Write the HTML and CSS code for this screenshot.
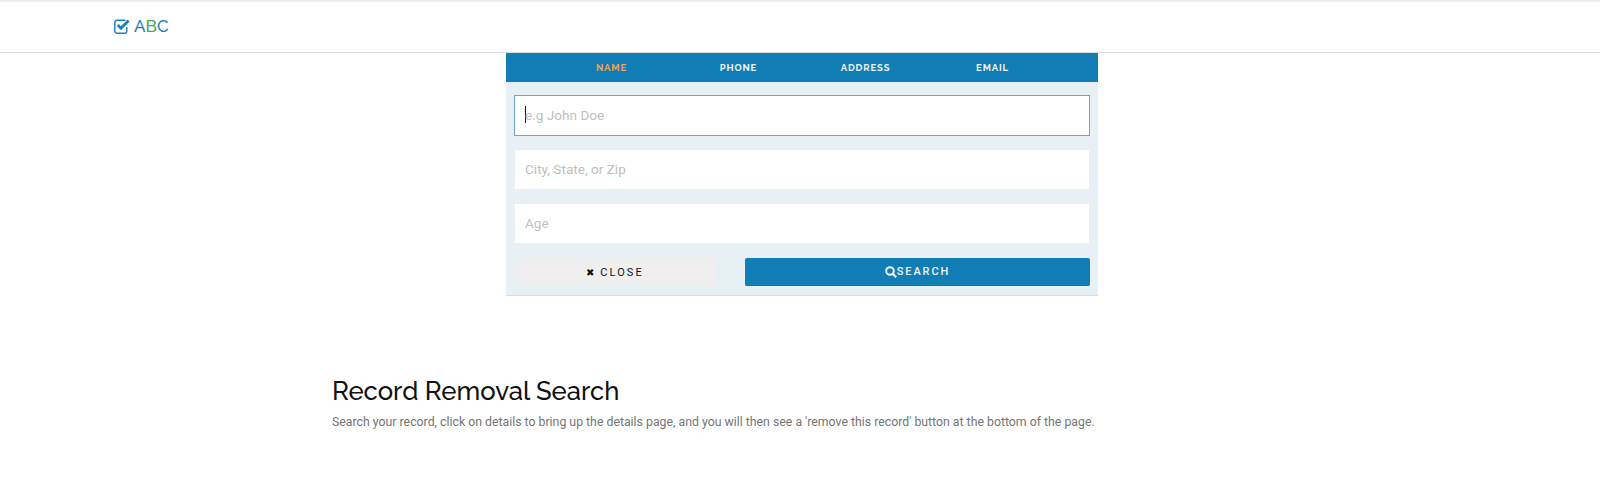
FILE: index.html
```html
<!DOCTYPE html>
<html lang="en">
<head>
<meta charset="utf-8">
<title>Record Removal Search</title>
<link rel="stylesheet" href="styles.css">
</head>
<body>
<header class="topbar">
  <a class="logo">
    <svg class="logo-icon" viewBox="0 0 16 15" width="16" height="15"><path d="M12.800 8V12a2.200 2.200 0 0 1-2.200 2.200H3A2.200 2.200 0 0 1 .8 12V3.500A2.200 2.200 0 0 1 3 1.300h8.500" fill="none" stroke="#1a82ba" stroke-width="1.400"/><path d="M3.800 6l3.200 3.200 7.600-7.600" fill="none" stroke="#1a82ba" stroke-width="2.800"/></svg>
    <span class="logo-a">A</span><span class="logo-b">B</span><span class="logo-c">C</span>
  </a>
</header>
<main>
  <section class="panel">
    <nav class="tabs">
      <span class="tab active">NAME</span>
      <span class="tab">PHONE</span>
      <span class="tab">ADDRESS</span>
      <span class="tab">EMAIL</span>
    </nav>
    <form class="fields">
      <div class="field focus"><span class="caret"></span><span>e.g John Doe</span></div>
      <div class="field">City, State, or Zip</div>
      <div class="field">Age</div>
      <div class="buttons">
        <button type="button" class="btn close"><span class="x">✖</span>CLOSE</button>
        <button type="button" class="btn search">
          <svg viewBox="0 0 12 12" width="12" height="12"><circle cx="5" cy="5" r="3.800" fill="none" stroke="#f0f6fa" stroke-width="2"/><path d="M8 8l3.200 3.200" stroke="#f0f6fa" stroke-width="2.200"/></svg>SEARCH
        </button>
      </div>
    </form>
  </section>
  <section class="intro">
    <h1>Record Removal Search</h1>
    <p>Search your record, click on details to bring up the details page, and you will then see a 'remove this record' button at the bottom of the page.</p>
  </section>
</main>
</body>
</html>
```
FILE: styles.css
```css
* { box-sizing: border-box; }
html, body { margin: 0; padding: 0; background: #fff; }
body { font-family: Roboto, sans-serif; overflow: hidden; }
.topbar { height: 53px; border-top: 2px solid #e6eef1; border-bottom: 1px solid #d9dcde; padding: 14px 0 0 114px; }
.logo { display: flex; align-items: center; height: 20px; font-family: Raleway, Lato, sans-serif; font-size: 17px; font-weight: 500; }
.logo-icon { margin-right: 4px; }
.logo-a, .logo-c { color: #1a7fb8; }
.logo-b { color: #4aa84f; }
.panel { width: 592px; margin-left: 506px; height: 243px; background: #e7f0f5; border-bottom: 1px solid #d5dfe5; }
.tabs { height: 29px; background: #117db5; display: flex; align-items: center; justify-content: center; font-family: Raleway, Lato, sans-serif; font-size: 9.5px; font-weight: 700; letter-spacing: .85px; color: #eef5f9; }
.tab { width: 127px; text-align: center; }
.tab.active { color: #eda548; }
.fields { padding: 13px 8px 0; display: flex; flex-direction: column; gap: 13px; }
.field { height: 41px; background: #fff; border: 1px solid #e7f0f5; display: flex; align-items: center; padding: 0 0 2px 10px; font-size: 13.6px; color: #bdbfc1; }
.field.focus { border-color: #6ea6cb; }
.caret { width: 1px; height: 17px; margin-right: -1px; background: #111; }
.buttons { display: flex; justify-content: space-between; margin-top: 1px; }
.btn { height: 28px; padding: 0; border: 0; font-family: Roboto, sans-serif; font-size: 11px; font-weight: 500; letter-spacing: 1.9px; display: flex; align-items: center; justify-content: center; }
.close { width: 202px; background: #efefef; color: #111; font-weight: 400; letter-spacing: 2.1px; }
.x { font-size: 10px; margin-right: 4px; }
.search { width: 345px; background: #117db5; color: #f0f6fa; border-radius: 2px; border-bottom: 1px solid #0f75aa; }
.intro { margin: 79px 0 0 332px; }
h1 { margin: 0; font-family: Raleway, Lato, sans-serif; font-size: 25.7px; font-weight: 500; color: #111; line-height: 32px; }
p { margin: 6px 0 0; font-size: 12.3px; color: #757575; line-height: 18px; }
```
